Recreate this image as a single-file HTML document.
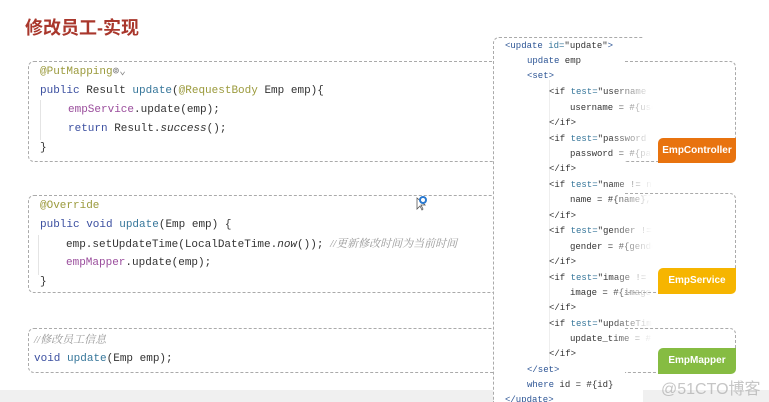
<!DOCTYPE html>
<html><head><meta charset="utf-8"><style>
*{margin:0;padding:0;box-sizing:border-box}
body{width:769px;height:402px;overflow:hidden;background:#fff;position:relative;font-family:"Liberation Mono",monospace;font-size:11px;color:#333}
.abs{position:absolute}
.title{left:25px;top:14px;font:bold 18px "Liberation Sans","Noto Sans CJK SC",sans-serif;color:#a9372c}
.box{position:absolute;border:1px dashed #aaa;border-radius:6px}
.ln{position:absolute;white-space:pre;line-height:14px}
.an{color:#9b9a3c}.kw{color:#3b4fa0}.fn{color:#36769a}.pu{color:#9a4d9c}.cm{color:#999;font-style:italic;font-family:"Liberation Serif","Noto Serif CJK SC",serif}
.vl{position:absolute;width:1px;background:#e4e4e4}
.badge{position:absolute;color:#fff;font:bold 10px "Liberation Sans",sans-serif;text-align:center;line-height:25px;border-radius:5px 0 5px 0}
.r .ln{font-size:9px}
.tg{color:#2d5595}
</style></head><body>
<div class="abs" style="left:0;top:390px;width:769px;height:12px;background:#f0f0f0"></div>
<div class="abs title">修改员工-实现</div>

<div class="box" style="left:28px;top:61px;width:720px;height:101px"></div>
<div class="vl" style="left:40px;top:100px;height:40px"></div>
<div class="ln" style="left:40px;top:65px"><span class="an">@PutMapping</span><span style="color:#888">⊚⌄</span></div>
<div class="ln" style="left:40px;top:84px"><span class="kw">public</span> Result <span class="fn">update</span>(<span class="an">@RequestBody</span> Emp emp){</div>
<div class="ln" style="left:68px;top:103px"><span class="pu">empService</span>.update(emp);</div>
<div class="ln" style="left:68px;top:122px"><span class="kw">return</span> Result.<i>success</i>();</div>
<div class="ln" style="left:40px;top:141px">}</div>

<div class="box" style="left:28px;top:195px;width:720px;height:98px"></div>
<div class="vl" style="left:38px;top:235px;height:40px"></div>
<div class="ln" style="left:40px;top:199px"><span class="an">@Override</span></div>
<div class="ln" style="left:40px;top:218px"><span class="kw">public void</span> <span class="fn">update</span>(Emp emp) {</div>
<div class="ln" style="left:66px;top:237px">emp.setUpdateTime(LocalDateTime.<i>now</i>()); <span class="cm">//更新修改时间为当前时间</span></div>
<div class="ln" style="left:66px;top:256px"><span class="pu">empMapper</span>.update(emp);</div>
<div class="ln" style="left:40px;top:275px">}</div>

<div class="box" style="left:28px;top:328px;width:720px;height:45px"></div>
<div class="ln" style="left:34px;top:333px"><span class="cm">//修改员工信息</span></div>
<div class="ln" style="left:34px;top:352px"><span class="kw">void</span> <span class="fn">update</span>(Emp emp);</div>

<svg class="abs" style="left:414px;top:194px" width="16" height="18"><path d="M3 4 L3 15 L6 12 L8 16 L9 15 L7 11 L11 11 Z" fill="#fff" stroke="#555" stroke-width="0.8"/><circle cx="9" cy="6" r="3" fill="none" stroke="#2b7ad0" stroke-width="2"/></svg>

<div class="abs r" style="left:493px;top:37px;width:276px;height:365px;">
 <div class="abs" style="left:0;top:0;width:150px;height:365px;background:#fff;border-left:1px dashed #aaa;border-top:1px dashed #aaa;border-top-left-radius:6px"></div>
 <div class="vl" style="left:56px;top:43px;height:290px;background:#eee"></div>
</div>
<div class="abs r" style="left:493px;top:37px;width:200px;height:365px;overflow:hidden">
<div class="ln" style="left:12px;top:2px"><span class="tg">&lt;update</span> <span class="fn">id=</span>"update"<span class="tg">&gt;</span></div>
<div class="ln" style="left:34px;top:17px"><span class="tg">update</span> emp</div>
<div class="ln" style="left:34px;top:32px"><span class="tg">&lt;set&gt;</span></div>
<div class="ln" style="left:56px;top:48px">&lt;if <span class="fn">test=</span>"username != null</div>
<div class="ln" style="left:77px;top:64px">username = #{username},</div>
<div class="ln" style="left:56px;top:79px">&lt;/if&gt;</div>
<div class="ln" style="left:56px;top:95px">&lt;if <span class="fn">test=</span>"password != null</div>
<div class="ln" style="left:77px;top:110px">password = #{password},</div>
<div class="ln" style="left:56px;top:125px">&lt;/if&gt;</div>
<div class="ln" style="left:56px;top:141px">&lt;if <span class="fn">test=</span>"name != null</div>
<div class="ln" style="left:77px;top:156px">name = #{name},</div>
<div class="ln" style="left:56px;top:172px">&lt;/if&gt;</div>
<div class="ln" style="left:56px;top:187px">&lt;if <span class="fn">test=</span>"gender != null</div>
<div class="ln" style="left:77px;top:203px">gender = #{gender},</div>
<div class="ln" style="left:56px;top:218px">&lt;/if&gt;</div>
<div class="ln" style="left:56px;top:234px">&lt;if <span class="fn">test=</span>"image != null</div>
<div class="ln" style="left:77px;top:249px">image = #{image},</div>
<div class="ln" style="left:56px;top:264px">&lt;/if&gt;</div>
<div class="ln" style="left:56px;top:280px">&lt;if <span class="fn">test=</span>"updateTime != null</div>
<div class="ln" style="left:77px;top:295px">update_time = #{updateTime}</div>
<div class="ln" style="left:56px;top:310px">&lt;/if&gt;</div>
<div class="ln" style="left:34px;top:326px"><span class="tg">&lt;/set&gt;</span></div>
<div class="ln" style="left:34px;top:341px"><span class="tg">where</span> id = #{id}</div>
<div class="ln" style="left:12px;top:356px"><span class="tg">&lt;/update&gt;</span></div>
</div>
<div class="abs" style="left:610px;top:55px;width:50px;height:330px;background:linear-gradient(to right,rgba(255,255,255,0),#fff 85%)"></div>
<div class="abs" style="left:660px;top:37px;width:109px;height:353px;background:#fff"></div>
<div class="box" style="left:625px;top:61px;width:111px;height:101px;border-left:none;border-top-left-radius:0;border-bottom-left-radius:0"></div>
<div class="box" style="left:625px;top:193px;width:111px;height:100px;border-left:none;border-top-left-radius:0;border-bottom-left-radius:0"></div>
<div class="box" style="left:625px;top:328px;width:111px;height:45px;border-left:none;border-top-left-radius:0;border-bottom-left-radius:0"></div>
<div class="badge" style="left:658px;top:138px;width:78px;height:25px;background:#e8730f">EmpController</div>
<div class="badge" style="left:658px;top:268px;width:78px;height:26px;background:#f6b500">EmpService</div>
<div class="badge" style="left:658px;top:348px;width:78px;height:26px;background:#86bc42">EmpMapper</div>
<div class="abs" style="left:661px;top:375px;font:16px 'Liberation Sans','Noto Sans CJK SC',sans-serif;color:rgba(160,160,160,0.6)">@51CTO博客</div>
</body></html>
